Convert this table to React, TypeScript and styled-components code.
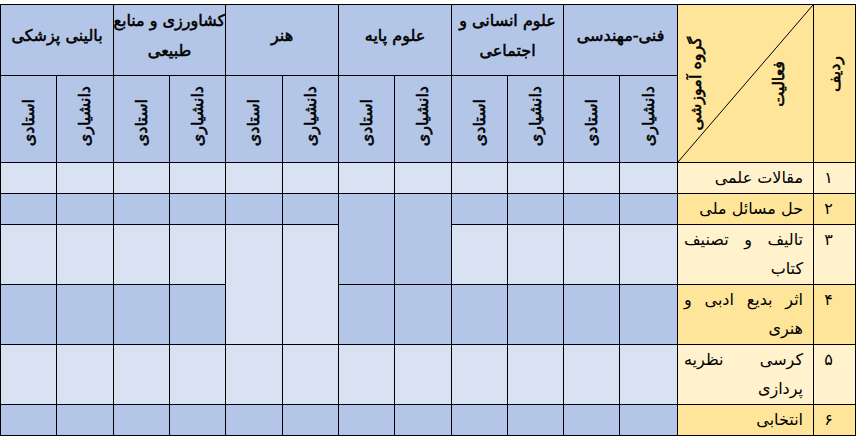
import React from "react";
import styled, { createGlobalStyle, css } from "styled-components";

const palette = {
  blueDark: "#B4C6E7",
  blueLight: "#D9E2F3",
  yellowDark: "#FFE599",
  yellowLight: "#FFF2CC",
  line: "#000000",
};

type Tone = "light" | "dark";

const GlobalStyle = createGlobalStyle`
  html, body { margin: 0; padding: 0; background: #ffffff; }
  body { font-family: "DejaVu Sans", sans-serif; color: #000; }
`;

/* DejaVu's Arabic shapes correctly only in the regular face, so heavy text is thickened with a stroke */
const heavy = css`
  font-weight: normal;
  -webkit-text-stroke: 0.55px #000;
`;

const Page = styled.div`
  width: 862px;
  height: 441px;
  padding-top: 4px;
  box-sizing: border-box;
  overflow: hidden;
`;

const Table = styled.table`
  direction: rtl;
  border-collapse: collapse;
  table-layout: fixed;
  width: 855px;
  font-family: "DejaVu Sans", sans-serif;
`;

const HeadRow = styled.tr<{ $h: number }>`
  height: ${(p) => p.$h}px;
`;

const BodyRow = styled.tr<{ $h: number }>`
  height: ${(p) => p.$h}px;
`;

const GroupHead = styled.th`
  ${heavy};
  border: 1px solid ${palette.line};
  background: ${palette.blueDark};
  font-size: 16px;
  line-height: 30px;
  text-align: center;
  vertical-align: middle;
  white-space: nowrap;
  padding: 0 0 9px;
`;

const SubHead = styled.th`
  border: 1px solid ${palette.line};
  background: ${palette.blueDark};
  text-align: center;
  vertical-align: bottom;
  padding: 0 0 12px;
`;

const VerticalLabel = styled.span`
  ${heavy};
  display: inline-block;
  writing-mode: vertical-rl;
  text-orientation: sideways;
  transform: rotate(180deg);
  font-size: 16px;
  line-height: 20px;
  white-space: nowrap;
`;

const CornerHead = styled.th`
  position: relative;
  border: 1px solid ${palette.line};
  background: ${palette.yellowDark};
  padding: 0;
  vertical-align: middle;
`;

const Diagonal = styled.svg`
  position: absolute;
  inset: 0;
  width: 100%;
  height: 100%;
  pointer-events: none;
`;

const CornerLabels = styled.div`
  display: flex;
  justify-content: space-between;
  align-items: center;
  padding: 0 24px 0 8px;
`;

const RadifHead = styled.th`
  border: 1px solid ${palette.line};
  background: ${palette.yellowDark};
  text-align: center;
  vertical-align: middle;
  padding: 0 0 16px;
`;

const NumCell = styled.td<{ $tone: Tone }>`
  border: 1px solid ${palette.line};
  background: ${(p) => (p.$tone === "dark" ? palette.yellowDark : palette.yellowLight)};
  font-size: 16px;
  line-height: 29px;
  text-align: center;
  vertical-align: top;
  padding: 0 12px 0 0;
`;

const ActivityCell = styled.td<{ $tone: Tone }>`
  border: 1px solid ${palette.line};
  background: ${(p) => (p.$tone === "dark" ? palette.yellowDark : palette.yellowLight)};
  font-size: 16px;
  line-height: 29px;
  vertical-align: top;
  padding: 0 10px 0 6px;
`;

const ActivityLine = styled.div<{ $justify?: boolean }>`
  text-align: ${(p) => (p.$justify ? "justify" : "right")};
  text-align-last: ${(p) => (p.$justify ? "justify" : "right")};
  white-space: nowrap;
`;

const GridCell = styled.td<{ $tone: Tone }>`
  border: 1px solid ${palette.line};
  background: ${(p) => (p.$tone === "dark" ? palette.blueDark : palette.blueLight)};
  padding: 0;
`;

const groups: { title: string[] }[] = [
  { title: ["فنی-مهندسی"] },
  { title: ["علوم انسانی و", "اجتماعی"] },
  { title: ["علوم پایه"] },
  { title: ["هنر"] },
  { title: ["کشاورزی و منابع", "طبیعی"] },
  { title: ["بالینی پزشکی"] },
];

// column widths in rtl order
const colWidths = [42, 136, 58, 56, 56, 56, 57, 56, 56, 57, 56, 56, 57, 56];

type Activity = { num: string; lines: string[]; tone: Tone; h: number };

const activities: Activity[] = [
  { num: "۱", lines: ["مقالات علمی"], tone: "light", h: 31 },
  { num: "۲", lines: ["حل مسائل ملی"], tone: "dark", h: 31 },
  { num: "۳", lines: ["تالیف و تصنیف", "کتاب"], tone: "light", h: 60 },
  { num: "۴", lines: ["اثر بدیع ادبی و", "هنری"], tone: "dark", h: 60 },
  { num: "۵", lines: ["کرسی نظریه", "پردازی"], tone: "light", h: 60 },
  { num: "۶", lines: ["انتخابی"], tone: "dark", h: 31 },
];

type Slot = { tone: Tone; span?: number } | null;
const L: Slot = { tone: "light" };
const D: Slot = { tone: "dark" };

const gridRows: Slot[][] = [
  [L, L, L, L, L, L, L, L, L, L, L, L],
  [D, D, D, D, { tone: "dark", span: 2 }, { tone: "dark", span: 2 }, D, D, D, D, D, D],
  [L, L, L, L, null, null, { tone: "light", span: 2 }, { tone: "light", span: 2 }, L, L, L, L],
  [D, D, D, D, D, D, null, null, D, D, D, D],
  [L, L, L, L, L, L, L, L, L, L, L, L],
  [D, D, D, D, D, D, D, D, D, D, D, D],
];

export default function App() {
  return (
    <Page>
      <GlobalStyle />
      <Table>
        <colgroup>
          {colWidths.map((w, i) => (
            <col key={i} style={{ width: w }} />
          ))}
        </colgroup>
        <thead>
          <HeadRow $h={71}>
            <RadifHead rowSpan={2}>
              <VerticalLabel>ردیف</VerticalLabel>
            </RadifHead>
            <CornerHead rowSpan={2}>
              <Diagonal viewBox="0 0 100 100" preserveAspectRatio="none">
                <line x1="100" y1="0" x2="0" y2="100" stroke="#000" strokeWidth="1" vectorEffect="non-scaling-stroke" />
              </Diagonal>
              <CornerLabels>
                <VerticalLabel>فعالیت</VerticalLabel>
                <VerticalLabel>گروه آموزشی</VerticalLabel>
              </CornerLabels>
            </CornerHead>
            {groups.map((g, i) => (
              <GroupHead key={i} colSpan={2}>
                {g.title.map((t, j) => (
                  <div key={j}>{t}</div>
                ))}
              </GroupHead>
            ))}
          </HeadRow>
          <HeadRow $h={87}>
            {groups.map((_, i) => (
              <React.Fragment key={i}>
                <SubHead>
                  <VerticalLabel>دانشیاری</VerticalLabel>
                </SubHead>
                <SubHead>
                  <VerticalLabel>استادی</VerticalLabel>
                </SubHead>
              </React.Fragment>
            ))}
          </HeadRow>
        </thead>
        <tbody>
          {activities.map((a, r) => (
            <BodyRow key={r} $h={a.h}>
              <NumCell $tone={a.tone}>{a.num}</NumCell>
              <ActivityCell $tone={a.tone}>
                {a.lines.map((t, j) => (
                  <ActivityLine key={j} $justify={a.lines.length > 1 && j === 0}>
                    {t}
                  </ActivityLine>
                ))}
              </ActivityCell>
              {gridRows[r].map((s, c) =>
                s ? <GridCell key={c} $tone={s.tone} rowSpan={s.span ?? 1} /> : null
              )}
            </BodyRow>
          ))}
        </tbody>
      </Table>
    </Page>
  );
}
